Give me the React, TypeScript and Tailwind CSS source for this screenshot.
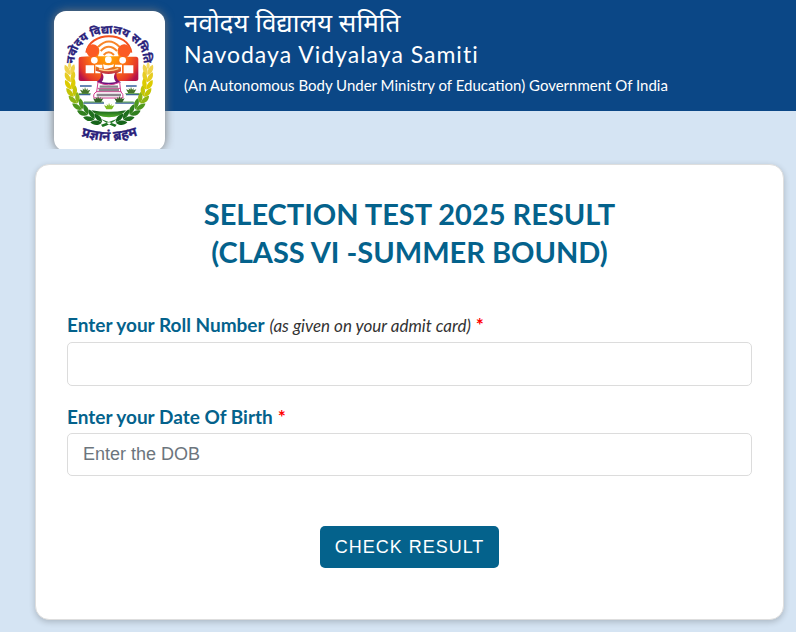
import React from "react";

const leaves = [
  { x: 89, y: 208, angle: -6, color: "#f0d24a" },
  { x: 90, y: 230, angle: -8, color: "#e6cc22" },
  { x: 91, y: 252, angle: -12, color: "#dccb00" },
  { x: 96, y: 274, angle: -18, color: "#c3c406" },
  { x: 104, y: 295, angle: -26, color: "#8cb413" },
  { x: 116, y: 315, angle: -36, color: "#4f981d" },
  { x: 131, y: 333, angle: -46, color: "#2f7f1e" },
  { x: 149, y: 349, angle: -56, color: "#1f701d" },
  { x: 170, y: 361, angle: -66, color: "#17651b" },
];

const people = [
  [163, 181],
  [205, 179],
  [248, 181],
];

function Wreath() {
  return (
    <g>
      {leaves.map(({ x, y, angle, color }) => (
        <g key={y} fill={color} transform={`translate(${x} ${y}) rotate(${angle})`}>
          <path d="M0 17 C-15 11 -18 -3 -13 -15 C-3 -9 3 3 0 17Z" />
          <path d="M1 17 C-1 1 4 -10 15 -14 C19 -1 14 11 1 17Z" />
        </g>
      ))}
      <path fill="#f5da62" d="M89 186 C95 192 95 201 89 209 C82 201 83 192 89 186Z" />
    </g>
  );
}

function Plant({ x, y, color }: { x: number; y: number; color: string }) {
  return (
    <path
      transform={`translate(${x} ${y})`}
      fill={color}
      d="M-15 -7 L-6 -4 L-7 -11 L-2 -6 L0 -15 L3 -6 L9 -11 L7 -4 L16 -7 L9 5 L-8 5Z"
    />
  );
}

function Logo() {
  return (
    <svg
      viewBox="42 33 333 420"
      className="block h-[140px] w-[111px]"
      role="img"
      aria-label="Navodaya Vidyalaya Samiti emblem"
    >
      <defs>
        <radialGradient id="school" gradientUnits="userSpaceOnUse" cx="205" cy="165" r="105">
          <stop offset="0" stopColor="#ffb300" />
          <stop offset="0.5" stopColor="#ff7412" />
          <stop offset="0.85" stopColor="#e5392a" />
          <stop offset="1" stopColor="#b5124a" />
        </radialGradient>
        <linearGradient id="book" x1="0" y1="0" x2="0" y2="1">
          <stop offset="0" stopColor="#f08a12" />
          <stop offset="0.5" stopColor="#b3134f" />
          <stop offset="1" stopColor="#54138a" />
        </linearGradient>
        <linearGradient id="hill" x1="0" y1="0" x2="0" y2="1">
          <stop offset="0" stopColor="#125c1b" />
          <stop offset="1" stopColor="#55b02c" />
        </linearGradient>
        <path id="upper" d="M103 200 C95 67 319 67 311 200" />
        <path id="lower" d="M112 404 Q207 441 304 402" />
      </defs>

      <g fill="none" stroke="#f4511e" strokeWidth="6">
        <path d="M139 158 C148 92 266 92 274 158" />
        <path d="M174 141 Q207 108 239 141" stroke="#f8862a" />
        <path d="M182 153 Q206 128 231 153" stroke="#f8862a" />
        <path d="M191 165 Q206 149 222 165" stroke="#f8862a" />
      </g>

      <path
        fill="url(#school)"
        d="M116 177 Q116 170 124 170 L149 169 Q136 151 144 142 Q155 130 171 138 Q184 147 174 169 L236 169 Q227 148 240 138 Q257 129 268 142 Q275 155 262 170 L288 170 Q295 170 295 178 L295 238 Q295 243 288 243 L122 243 Q116 243 116 238Z"
      />
      <circle cx="158" cy="152" r="19" fill="#fb5b24" />
      <circle cx="253" cy="152" r="19" fill="#fb5b24" />
      <g fill="#fff">
        {people.map(([x, y]) => (
          <circle key={x} cx={x} cy={y} r="10" />
        ))}
        <path d="M137 196 H162 V220 H137Z M166 194 H187 V220 H166Z M225 194 H246 V220 H225Z M251 196 H280 V220 H251Z" />
        <path d="M189 193 Q205 199 222 193 L218 207 H192Z" />
      </g>

      <path
        fill="url(#book)"
        d="M167 199 Q189 211 207 205 Q225 198 243 202 V214 L230 220 Q226 238 243 247 Q223 259 207 253 Q189 259 170 246 Q188 234 181 217 L167 212Z"
      />
      <path fill="#fff" d="M186 219 Q206 225 225 219 Q218 235 228 246 Q206 251 185 246 Q196 232 186 219Z" />
      <path d="M177 207 Q207 217 235 206" fill="none" stroke="#ffd08b" strokeWidth="4" />
      <g stroke="#d13b8d" strokeWidth="3" fill="#fff">
        <path d="M174 247 Q205 262 239 247 L242 274 Q251 282 249 294 H162 Q158 281 170 275Z" />
        <path d="M168 275 H244 M173 265 H240" fill="none" />
      </g>
      <path d="M179 260 H234 M176 270 H237 M170 285 H243" stroke="#8b858d" strokeWidth="7" />

      <g stroke="#375f9d" strokeWidth="4">
        <path d="M120 258 H155 M116 284 H151 M258 258 H290 M258 284 H299 M130 309 H192 M226 309 H284" />
      </g>
      <g stroke="#5da250" strokeWidth="3">
        <path d="M116 281 H152 M256 281 H298 M132 306 H190 M228 306 H281" />
      </g>
      <Plant x={135} y={276} color="#46762a" />
      <Plant x={273} y={275} color="#46762a" />
      <Plant x={174} y={302} color="#326426" />
      <Plant x={238} y={302} color="#326426" />
      <Plant x={207} y={323} color="#83bd24" />

      <path d="M154 331 Q207 340 258 331 Q245 351 207 352 Q168 351 154 331Z" fill="url(#hill)" />
      <Wreath />
      <g transform="matrix(-1 0 0 1 413 0)">
        <Wreath />
      </g>
      <path
        d="M181 356 Q208 367 230 374 L225 381 Q203 373 181 356Z M232 356 Q207 366 183 374 L188 381 Q213 373 232 356Z"
        fill="#1d7422"
      />

      <g
        fill="#29217b"
        stroke="#29217b"
        strokeWidth="1"
        fontFamily="'Noto Sans Devanagari', 'Noto Sans', sans-serif"
        fontWeight="700"
      >
        <text fontSize="34">
          <textPath href="#upper" startOffset="50%" textAnchor="middle">नवोदय विद्यालय समिति</textPath>
        </text>
        <text fontSize="40">
          <textPath href="#lower" startOffset="50%" textAnchor="middle">प्रज्ञानं ब्रहम</textPath>
        </text>
      </g>
    </svg>
  );
}

const labelClass = "block pb-px text-[19px] leading-[30px] text-[#04628c]";

const inputClass =
  "block w-full rounded-[5px] border border-[#dcdcdc] bg-white px-[15px] font-['Liberation_Sans',Arial,sans-serif] text-lg text-[#495057] placeholder:text-[#6c757d] placeholder:opacity-100 focus:outline-2 focus:outline-[#04628c]";

export default function App() {
  return (
    <div className="min-h-screen bg-[#d5e4f3] font-[Lato,'Noto_Sans',sans-serif]">
      <header className="flex h-[111px] items-start bg-[#0b4786] pl-11">
        <div className="relative z-10 h-[149px] shrink-0 overflow-hidden px-2.5 pt-[11px]">
          <div className="overflow-hidden rounded-[12px] bg-white shadow-[0_0_10px_#777777]">
            <Logo />
          </div>
        </div>
        <div className="pl-[9px] pt-1.5 text-white">
          <p lang="hi" className="text-[26px] leading-8">नवोदय विद्यालय समिति</p>
          <h1 className="text-[23px] leading-8 tracking-[1px]">Navodaya Vidyalaya Samiti</h1>
          <p className="text-[15px] leading-[30px]">
            (An Autonomous Body Under Ministry of Education) Government Of India
          </p>
        </div>
      </header>

      <main className="pb-3 pl-[35px] pr-3 pt-[53px]">
        <form
          className="rounded-[14px] border border-[#dedede] bg-white px-[31px] pb-[51px] pt-[30px] shadow-[0_2px_6px_rgba(0,0,0,0.2)]"
          onSubmit={(event: React.FormEvent) => event.preventDefault()}
        >
          <h2 className="text-center text-[29px] font-bold leading-[38px] text-[#04628c]">
            SELECTION TEST 2025 RESULT
            <br />
            (CLASS VI -SUMMER BOUND)
          </h2>

          <div className="mt-[39px]">
            <label htmlFor="roll" className={labelClass}>
              <span className="font-bold">Enter your Roll Number</span>{" "}
              <i className="text-[17px] text-[#333333]">(as given on your admit card)</i>{" "}
              <span className="font-bold text-[#ff0000]">*</span>
            </label>
            <input id="roll" type="text" className={`${inputClass} h-11`} />
          </div>

          <div className="mt-4">
            <label htmlFor="dob" className={labelClass}>
              <span className="font-bold">Enter your Date Of Birth</span>{" "}
              <span className="font-bold text-[#ff0000]">*</span>
            </label>
            <input id="dob" type="text" placeholder="Enter the DOB" className={`${inputClass} h-[43px]`} />
          </div>

          <div className="mt-[50px] text-center">
            <button
              type="submit"
              className="h-[42px] rounded-[5px] bg-[#04628c] px-[15px] font-['Liberation_Sans',Arial,sans-serif] text-lg tracking-[1px] text-white"
            >
              CHECK RESULT
            </button>
          </div>
        </form>
      </main>
    </div>
  );
}
